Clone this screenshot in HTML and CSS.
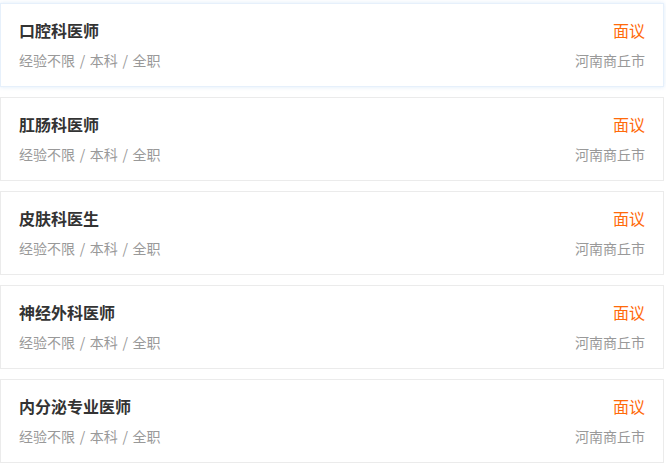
FILE: index.html
```html
<!DOCTYPE html>
<html lang="zh-CN">
<head>
  <meta charset="UTF-8" />
  <title>职位列表</title>
  <link rel="stylesheet" href="styles.css">
</head>
<body>
  <div class="job-list">
    <div class="job-card active">
      <div class="job-row">
        <div class="job-title">口腔科医师</div>
        <div class="job-salary">面议</div>
      </div>
      <div class="job-row sub">
        <div class="job-meta">经验不限 / 本科 / 全职</div>
        <div class="job-city">河南商丘市</div>
      </div>
    </div>
    <div class="job-card">
      <div class="job-row">
        <div class="job-title">肛肠科医师</div>
        <div class="job-salary">面议</div>
      </div>
      <div class="job-row sub">
        <div class="job-meta">经验不限 / 本科 / 全职</div>
        <div class="job-city">河南商丘市</div>
      </div>
    </div>
    <div class="job-card">
      <div class="job-row">
        <div class="job-title">皮肤科医生</div>
        <div class="job-salary">面议</div>
      </div>
      <div class="job-row sub">
        <div class="job-meta">经验不限 / 本科 / 全职</div>
        <div class="job-city">河南商丘市</div>
      </div>
    </div>
    <div class="job-card">
      <div class="job-row">
        <div class="job-title">神经外科医师</div>
        <div class="job-salary">面议</div>
      </div>
      <div class="job-row sub">
        <div class="job-meta">经验不限 / 本科 / 全职</div>
        <div class="job-city">河南商丘市</div>
      </div>
    </div>
    <div class="job-card">
      <div class="job-row">
        <div class="job-title">内分泌专业医师</div>
        <div class="job-salary">面议</div>
      </div>
      <div class="job-row sub">
        <div class="job-meta">经验不限 / 本科 / 全职</div>
        <div class="job-city">河南商丘市</div>
      </div>
    </div>
  </div>
</body>
</html>
```

FILE: styles.css
```css
* { margin: 0; padding: 0; box-sizing: border-box; }
body {
  background: #fff;
  font-family: "Noto Sans CJK SC", "Noto Sans", sans-serif;
  color: #333;
}
.job-list {
  width: 664px;
  padding-top: 3px;
  display: flex;
  flex-direction: column;
  gap: 10px;
}
.job-card {
  height: 84px;
  border: 1px solid #ebebeb;
  background: #fff;
  padding: 14px 18px 15px 18px;
}
/* 선택된 카드 */
.job-card.active {
  border-color: #e6f0fb;
  box-shadow: 0 0 4px rgba(60, 140, 230, 0.18);
}
.job-row { display: flex; justify-content: space-between; align-items: center; height: 24px; }
.job-row.sub { height: 20px; margin-top: 8px; }
.job-title { font-size: 16px; font-weight: bold; color: #333; line-height: 24px; }
.job-salary { font-size: 16px; color: #ff6a0a; line-height: 24px; }
.job-meta, .job-city { font-size: 14px; color: #999; line-height: 20px; }
.job-meta { word-spacing: 1.5px; }
```
